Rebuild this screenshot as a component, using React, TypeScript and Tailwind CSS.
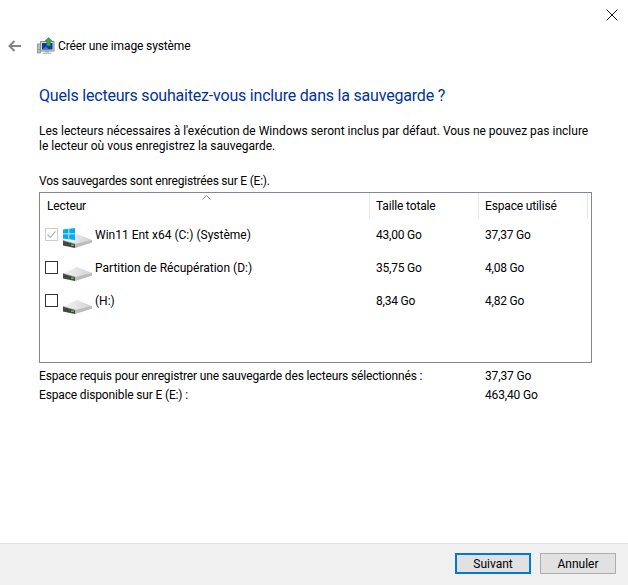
import { X } from "lucide-react";

const drives = [
  { name: "Win11  Ent x64 (C:) (Système)", total: "43,00 Go", used: "37,37 Go", system: true },
  { name: "Partition de Récupération (D:)", total: "35,75 Go", used: "4,08 Go", system: false },
  { name: "(H:)", total: "8,34 Go", used: "4,82 Go", system: false },
];

function BackArrow() {
  return (
    <svg width="14" height="12" viewBox="0 0 14 12" fill="none" stroke="#858585" strokeWidth="2">
      <path d="M13 6H2M6.500 1L1.500 6l5 5" />
    </svg>
  );
}

function BackupIcon() {
  return (
    <svg width="18" height="18" viewBox="0 0 18 18">
      <rect x="0.500" y="7" width="3" height="9" fill="#b9bdb9" stroke="#777" strokeWidth="0.600" />
      <rect x="1.300" y="12" width="1.400" height="1" fill="#35c24a" />
      <rect x="3.500" y="4.500" width="13.500" height="9.500" fill="#d4d8dc" stroke="#8a8f94" />
      <rect x="5" y="6" width="10.500" height="6.500" fill="#12399c" />
      <path d="M5 12.500l4-3 3 3z" fill="#3d78d6" />
      <rect x="8" y="14" width="4" height="1.500" fill="#a6a9ac" />
      <rect x="5.500" y="15.500" width="9" height="1.500" fill="#c4c7ca" />
      <path d="M11.500 0.500l3.800 3.700h-2v4.800h-3.500V4.200H7.800z" fill="#36a84a" stroke="#1f7d36" strokeWidth="0.500" />
    </svg>
  );
}

function DriveIcon() {
  return (
    <svg width="29" height="14" viewBox="0 0 29 14" className="block">
      <defs>
        <linearGradient id="driveTop" x1="0" y1="0" x2="1" y2="0">
          <stop offset="0" stopColor="#f4f4f4" />
          <stop offset="1" stopColor="#d2d2d2" />
        </linearGradient>
      </defs>
      <path d="M0 6.500L14 0L29 6L29 8.500L12 14L12 10z" fill="url(#driveTop)" />
      <path d="M12 10L29 6L29 8.500L12 14z" fill="#bcbcbc" />
      <path d="M0 6.500L12 10V14L0 11.500z" fill="#454545" />
      <path d="M0 6.500L12 10" stroke="#8c8c8c" strokeWidth="0.600" fill="none" />
      <rect x="8" y="10.500" width="3" height="1.500" fill="#46c05a" />
    </svg>
  );
}

function WindowsLogo() {
  return (
    <svg width="12" height="12" viewBox="0 0 12 12" fill="#00adef" className="block">
      <path d="M0 1.500L5.500 0.800V5.600H0zM6.200 0.700L12 0V5.600H6.200zM0 6.300H5.500V11.200L0 10.500zM6.200 6.300H12V12L6.200 11.300z" />
    </svg>
  );
}

function CheckBox({ disabled }: { disabled: boolean }) {
  if (disabled) {
    return (
      <span className="flex h-[13px] w-[13px] items-center justify-center border border-[#cccccc] bg-white">
        <svg width="11" height="11" viewBox="0 0 11 11" fill="none" stroke="#b5b5b5" strokeWidth="1.200">
          <path d="M1.500 5.500l2.800 2.800 5.200-6" />
        </svg>
      </span>
    );
  }
  return <span className="block h-[13px] w-[13px] border border-[#333333] bg-white" />;
}

export default function App() {
  return (
    <div className="flex h-[585px] w-[628px] flex-col bg-white font-['Roboto',sans-serif] text-[12px] leading-[16px] text-black">
      <div className="flex h-[31px] shrink-0 justify-end pr-[6px] pt-[5px]">
        <X size={20} strokeWidth={1.1} className="text-black" />
      </div>

      <div className="flex h-[30px] items-center">
        <div className="ml-[8px] w-[29px]">
          <BackArrow />
        </div>
        <BackupIcon />
        <span className="ml-[3px] tracking-[-0.13px]">Créer une image système</span>
      </div>

      <div className="flex-1 pl-[39px] pr-[36px]">
        <h1 className="mt-[23px] text-[16px] leading-[24px] tracking-[-0.2px] text-[#003399]">
          Quels lecteurs souhaitez-vous inclure dans la sauvegarde ?
        </h1>
        <p className="mt-[16px] leading-[15px]">
          Les lecteurs nécessaires à l'exécution de Windows seront inclus par défaut. Vous ne pouvez pas inclure le
          lecteur où vous enregistrez la sauvegarde.
        </p>
        <p className="mt-[19px] tracking-[-0.22px]">Vos sauvegardes sont enregistrées sur E (E:).</p>

        <div className="mt-[3px] h-[171px] border border-[#828790]">
          <div className="relative grid h-[25px] grid-cols-[330px_109px_109px] pr-[3px] tracking-[-0.15px]">
            <span className="absolute left-[162px] top-[2px]">
              <svg width="9" height="5" viewBox="0 0 9 5" fill="none" stroke="#8a8a8a" className="block">
                <path d="M0.500 4.500L4.500 0.500L8.500 4.500" />
              </svg>
            </span>
            <div className="border-r border-[#e5e5e5] pl-[7px] pt-[5px]">Lecteur</div>
            <div className="border-r border-[#e5e5e5] pl-[6px] pt-[5px]">Taille totale</div>
            <div className="border-r border-[#e5e5e5] pl-[6px] pt-[5px]">Espace utilisé</div>
          </div>
          {drives.map((d) => (
            <div key={d.name} className="grid h-[33px] grid-cols-[329px_109px_110px] items-center">
              <div className="flex items-center pl-[5px]">
                <CheckBox disabled={d.system} />
                <div className="relative ml-[5px] mt-[12px]">
                  {d.system && (
                    <div className="absolute left-0 top-[-6px]">
                      <WindowsLogo />
                    </div>
                  )}
                  <DriveIcon />
                </div>
                <span className="ml-[3px]">{d.name}</span>
              </div>
              <div className="pl-[7px] tracking-[-0.2px]">{d.total}</div>
              <div className="pl-[7px] tracking-[-0.2px]">{d.used}</div>
            </div>
          ))}
        </div>

        <div className="mt-[4px] grid grid-cols-[446px_auto] leading-[19px] tracking-[-0.15px]">
          <span>Espace requis pour enregistrer une sauvegarde des lecteurs sélectionnés :</span>
          <span>37,37 Go</span>
          <span>Espace disponible sur E (E:) :</span>
          <span>463,40 Go</span>
        </div>
      </div>

      <div className="flex h-[42px] shrink-0 items-start justify-end gap-[9px] border-t border-[#dfdfdf] bg-[#f0f0f0] pr-[12px] pt-[9px]">
        <button className="h-[21px] w-[76px] border-2 border-[#0078d7] bg-[#e1e1e1] leading-none">Suivant</button>
        <button className="h-[21px] w-[76px] border border-[#adadad] bg-[#e1e1e1] leading-none">Annuler</button>
      </div>
    </div>
  );
}
